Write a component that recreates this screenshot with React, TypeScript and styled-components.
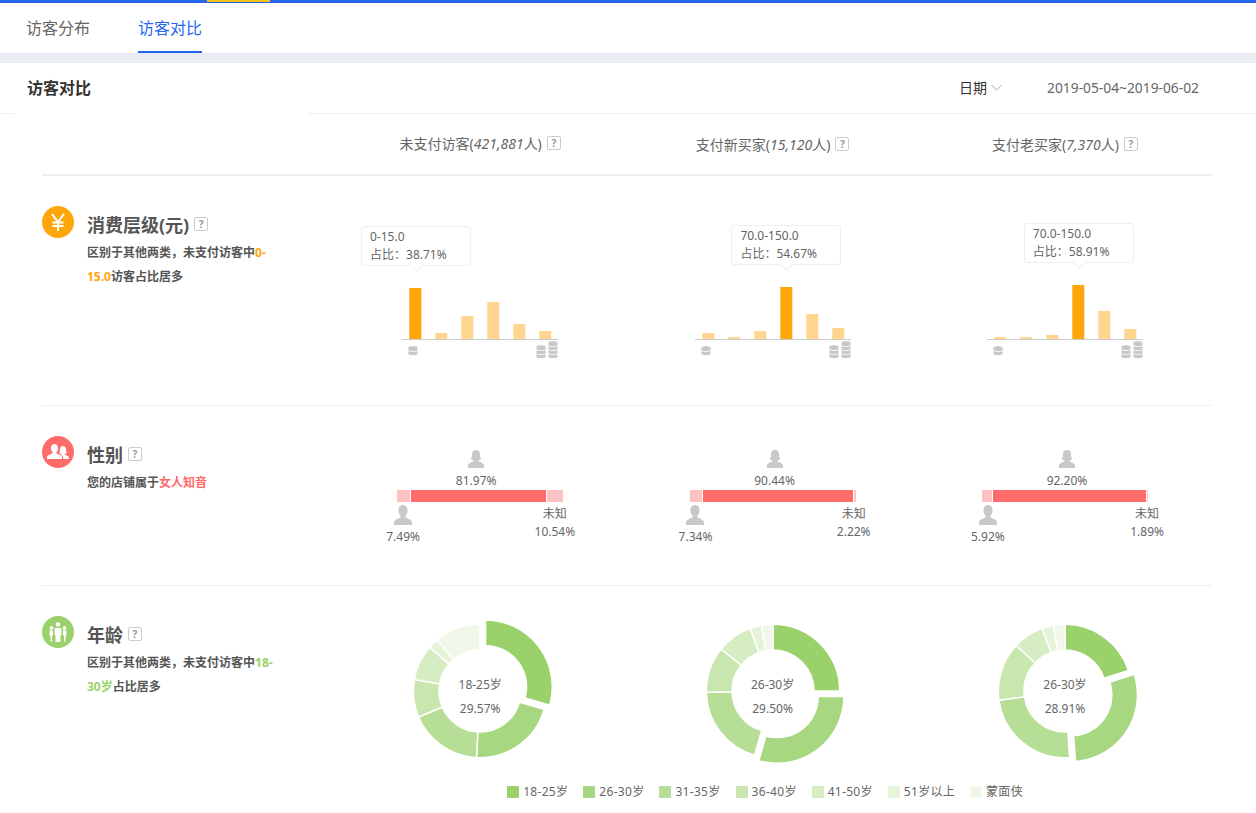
import React from "react";
import styled, { createGlobalStyle } from "styled-components";

const FONT = `"Noto Sans", "Noto Sans CJK SC", sans-serif`;
const ORANGE = "#ffa60b";
const RED = "#ff6a6a";
const GREEN = "#9ad16a";
const SLICE_COLORS = ["#9ad16a", "#a8d782", "#b7de97", "#c8e6ad", "#d6ecc3", "#e5f3d8", "#f1f8ea"];
const LEGEND = ["18-25岁", "26-30岁", "31-35岁", "36-40岁", "41-50岁", "51岁以上", "蒙面侠"];

const GlobalStyle = createGlobalStyle`
  html, body {
    margin: 0;
    padding: 0;
    background: #fff;
    overflow: hidden;
  }
  body {
    font-family: ${FONT};
    color: #666;
  }
`;

const Page = styled.div`
  width: 1256px;
  height: 813px;
  overflow: hidden;
  position: relative;
`;
const TopBar = styled.div`
  height: 3px;
  background: #2667ee;
  box-shadow: 0 1px 3px rgba(0, 0, 0, 0.18);
  padding-left: 207px;
`;
const TopBarMark = styled.div`
  width: 63px;
  height: 2px;
  background: #f5c518;
`;
const Nav = styled.nav`
  height: 50px;
  display: flex;
  gap: 48px;
  padding-left: 26px;
  background: #fff;
  box-shadow: 0 1px 3px rgba(0, 0, 0, 0.14);
`;
const NavTab = styled.a<{ $active?: boolean }>`
  font-size: 16px;
  line-height: 50px;
  height: 50px;
  box-sizing: border-box;
  color: ${(p) => (p.$active ? "#2667ee" : "#666")};
  border-bottom: 2px solid ${(p) => (p.$active ? "#2667ee" : "transparent")};
`;
const Gap = styled.div`
  height: 10px;
  background: #e9edf3;
`;
const PanelHeader = styled.header`
  height: 51px;
  box-sizing: border-box;
  position: relative;
  display: flex;
  align-items: center;
  padding: 0 57px 2px 27px;
  border-bottom: 1px solid #eee;
`;
const PanelTitle = styled.h2`
  margin: 0;
  flex: 1;
  font-size: 16px;
  font-weight: 700;
  color: #333;
`;
const DateSelect = styled.div`
  display: flex;
  align-items: center;
  gap: 4px;
  font-size: 14px;
  color: #333;
  margin-right: 45px;
`;
const DateRange = styled.div`
  font-size: 13.8px;
  color: #666;
`;
const LinePatch = styled.div`
  position: absolute;
  left: 15px;
  bottom: -1px;
  width: 293px;
  height: 1px;
  background: #fff;
`;
const Main = styled.main`
  margin: 0 44px 0 42px;
`;
const ColumnRow = styled.div`
  display: grid;
  grid-template-columns: 292px repeat(3, 292.4px);
  height: 62px;
  box-sizing: border-box;
  border-bottom: 2px solid #eee;
`;
const ColumnTitle = styled.div<{ $top: number }>`
  display: flex;
  justify-content: center;
  align-items: center;
  gap: 5px;
  font-size: 14px;
  color: #666;
  height: 20px;
  padding-top: ${(p) => p.$top}px;
  white-space: nowrap;
`;
const Help = styled.span`
  display: inline-flex;
  align-items: center;
  justify-content: center;
  width: 12px;
  height: 12px;
  border: 1px solid #ccc;
  border-radius: 2px;
  font-size: 10px;
  font-weight: 700;
  line-height: 1;
  color: #999;
`;
const Section = styled.section<{ $height: number; $last?: boolean }>`
  display: grid;
  grid-template-columns: 292px repeat(3, 292.4px);
  align-content: start;
  height: ${(p) => p.$height}px;
  margin-right: ${(p) => (p.$last ? 0 : 1)}px;
  border-bottom: ${(p) => (p.$last ? "none" : "1px solid #eee")};
`;
const Intro = styled.div`
  display: flex;
  gap: 13px;
  padding-top: 30px;
`;
const IconCircle = styled.div<{ $color: string }>`
  width: 32px;
  height: 32px;
  flex: none;
  border-radius: 50%;
  background: ${(p) => p.$color};
  display: flex;
  align-items: center;
  justify-content: center;
`;
const IntroBody = styled.div`
  width: 186px;
`;
const Heading = styled.h3`
  margin: 0;
  display: flex;
  align-items: center;
  gap: 5px;
  height: 35px;
  font-size: 18px;
  font-weight: 700;
  color: #555;
`;
const Summary = styled.p`
  margin: 0;
  font-size: 12px;
  font-weight: 700;
  line-height: 24px;
  color: #555;
`;
const Accent = styled.span<{ $color: string }>`
  color: ${(p) => p.$color};
`;

const BarCell = styled.div`
  display: flex;
  justify-content: center;
  padding-top: 104px;
`;
const BarChartBox = styled.div`
  position: relative;
  width: 156px;
  height: 80px;
`;
const Tooltip = styled.div`
  position: absolute;
  width: 110px;
  box-sizing: border-box;
  padding: 1px 8px;
  background: #fff;
  border: 1px solid #eee;
  border-radius: 3px;
  font-size: 12px;
  line-height: 18px;
  color: #666;
  white-space: nowrap;
  &::after {
    content: "";
    position: absolute;
    left: 50%;
    bottom: -5px;
    width: 8px;
    height: 8px;
    margin-left: -4px;
    background: #fff;
    border-right: 1px solid #eee;
    border-bottom: 1px solid #eee;
    transform: rotate(45deg);
  }
`;

const GenderCell = styled.div`
  display: flex;
  justify-content: center;
  padding-top: 44px;
`;
const GenderBox = styled.div`
  width: 166px;
  font-size: 12px;
  line-height: 18px;
  color: #666;
`;
const TopGroup = styled.div<{ $shift: number }>`
  display: flex;
  flex-direction: column;
  align-items: center;
  gap: 4px;
  margin-left: ${(p) => p.$shift}px;
`;
const GenderBar = styled.div`
  display: flex;
  gap: 1px;
  height: 12px;
`;
const GenderPart = styled.div<{ $strong?: boolean }>`
  background: ${(p) => (p.$strong ? RED : "#ffc2c2")};
`;
const BottomRow = styled.div`
  display: flex;
  justify-content: space-between;
  margin-top: 3px;
`;
const SideGroup = styled.div<{ $left?: number; $right?: number; $gap?: number }>`
  display: flex;
  flex-direction: column;
  align-items: center;
  gap: ${(p) => p.$gap ?? 0}px;
  margin-left: ${(p) => p.$left ?? 0}px;
  margin-right: ${(p) => p.$right ?? 0}px;
`;

const DonutCell = styled.div`
  display: flex;
  justify-content: center;
  padding-top: 25px;
`;
const DonutBox = styled.div`
  position: relative;
  width: 160px;
  height: 160px;
`;
const DonutLabel = styled.div`
  position: absolute;
  inset: 12px 0 0;
  display: flex;
  flex-direction: column;
  align-items: center;
  justify-content: center;
  font-size: 12px;
  line-height: 24px;
  color: #666;
`;
const Legend = styled.div`
  grid-column: 2 / 5;
  display: flex;
  justify-content: center;
  gap: 15px;
  padding: 12px 15px 0 0;
`;
const LegendItem = styled.div`
  display: flex;
  align-items: center;
  gap: 4px;
  font-size: 12px;
  line-height: 18px;
  letter-spacing: 0.3px;
  color: #666;
`;
const Swatch = styled.i<{ $color: string }>`
  width: 12px;
  height: 12px;
  background: ${(p) => p.$color};
`;

function Coins({ x, y, count }: { x: number; y: number; count: number }) {
  // the lower discs are drawn first, so each upper disc keeps its whole top
  const discs = Array.from({ length: count }, (_, i) => count - 1 - i);
  return (
    <g fill="#c8c8c8" stroke="#fff" strokeWidth="0.8">
      {discs.map((i) => (
        <path
          key={i}
          d={`M${x} ${y + i * 4 + 2}c0-1.300 2.200-2.200 5-2.200s5 .9 5 2.200v1.400c0 1.300-2.200 2.200-5 2.200s-5-.9-5-2.200z`}
        />
      ))}
    </g>
  );
}

type BarData = { bars: number[]; active: number; range: string; share: string };

function BarChart({ bars, active, range, share }: BarData) {
  const barCenter = 13.3 + active * 26;
  return (
    <BarChartBox>
      <svg width="156" height="80" viewBox="0 0 156 80">
        {bars.map((h, i) => (
          <rect
            key={i}
            x={7.3 + i * 26}
            y={59 - h}
            width="12"
            height={h}
            fill={i === active ? ORANGE : "#ffd58f"}
          />
        ))}
        <line x1="0" x2="156" y1="59.5" y2="59.5" stroke="#ccc" />
        <Coins x={6} y={66} count={2} />
        <Coins x={134} y={65} count={3} />
        <Coins x={146} y={61} count={4} />
      </svg>
      <Tooltip style={{ left: barCenter - 54.5, bottom: 43 + bars[active] }}>
        <div>{range}</div>
        <div>占比：{share}</div>
      </Tooltip>
    </BarChartBox>
  );
}

function Woman() {
  return (
    <svg width="18" height="18" viewBox="0 0 18 18" fill="#c8c8c8">
      <path d="M9 0c2.600 0 4 1.900 4 4.300 0 1.600.3 3.200 1 4.300.3.500-.5 1.400-2.300 1.700v1.200c1.600.7 5.300 1.500 5.300 4.500v2H1v-2c0-3 3.700-3.800 5.300-4.500v-1.200C4.500 10 3.700 9.100 4 8.600c.7-1.100 1-2.700 1-4.300C5 1.900 6.400 0 9 0z" />
    </svg>
  );
}

function Man() {
  return (
    <svg width="20" height="20" viewBox="0 0 20 20" fill="#c8c8c8">
      <path d="M10 0c2.900 0 4.600 2.200 4.600 5.200 0 2.200-.8 4.100-2.100 5.200v2c1.800.9 6.500 1.800 6.500 5V20H1v-2.600c0-3.200 4.700-4.100 6.500-5v-2C6.200 9.300 5.400 7.400 5.400 5.200 5.400 2.200 7.100 0 10 0z" />
    </svg>
  );
}

type GenderData = {
  female: string;
  male: string;
  unknown: string;
  parts: [number, number, number];
  shift: number;
  right: number;
};

function GenderChart({ female, male, unknown, parts, shift, right }: GenderData) {
  return (
    <GenderBox>
      <TopGroup $shift={shift}>
        <Woman />
        <div>{female}</div>
      </TopGroup>
      <GenderBar>
        <GenderPart style={{ width: parts[0] }} />
        <GenderPart $strong style={{ width: parts[1] }} />
        <GenderPart style={{ width: parts[2] }} />
      </GenderBar>
      <BottomRow>
        <SideGroup $left={-11} $gap={3}>
          <Man />
          <div>{male}</div>
        </SideGroup>
        <SideGroup $right={-right}>
          <div>未知</div>
          <div>{unknown}</div>
        </SideGroup>
      </BottomRow>
    </GenderBox>
  );
}

function polar(r: number, deg: number) {
  const a = (deg * Math.PI) / 180;
  return [80 + r * Math.sin(a), 80 - r * Math.cos(a)];
}

function slicePath(from: number, to: number) {
  const R = 66.7;
  const r = 41;
  const [x1, y1] = polar(R, from);
  const [x2, y2] = polar(R, to);
  const [x3, y3] = polar(r, to);
  const [x4, y4] = polar(r, from);
  const large = to - from > 180 ? 1 : 0;
  return `M${x1} ${y1}A${R} ${R} 0 ${large} 1 ${x2} ${y2}L${x3} ${y3}A${r} ${r} 0 ${large} 0 ${x4} ${y4}Z`;
}

type DonutData = { stops: number[]; selected: number; label: string; share: string };

function Donut({ stops, selected, label, share }: DonutData) {
  return (
    <DonutBox>
      <svg width="160" height="160" viewBox="0 0 160 160">
        {stops.slice(0, -1).map((from, i) => {
          const to = stops[i + 1];
          const mid = (((from + to) / 2) * Math.PI) / 180;
          const offset = i === selected ? 7 : 0;
          return (
            <path
              key={i}
              d={slicePath(from, to)}
              fill={SLICE_COLORS[i]}
              stroke="#fff"
              strokeWidth="1.5"
              transform={`translate(${offset * Math.sin(mid)} ${-offset * Math.cos(mid)})`}
            />
          );
        })}
      </svg>
      <DonutLabel>
        <div>{label}</div>
        <div>{share}</div>
      </DonutLabel>
    </DonutBox>
  );
}

const BAR_DATA: BarData[] = [
  { bars: [51, 6, 23, 37, 15, 8], active: 0, range: "0-15.0", share: "38.71%" },
  { bars: [6, 2, 8, 52, 25, 11], active: 3, range: "70.0-150.0", share: "54.67%" },
  { bars: [2, 2, 4, 54, 28, 10], active: 3, range: "70.0-150.0", share: "58.91%" },
];

const GENDER_DATA: GenderData[] = [
  { female: "81.97%", male: "7.49%", unknown: "10.54%", parts: [13, 135, 16], shift: -8, right: 12 },
  { female: "90.44%", male: "7.34%", unknown: "2.22%", parts: [12, 150, 2], shift: 4, right: 15 },
  { female: "92.20%", male: "5.92%", unknown: "1.89%", parts: [10, 153, 1], shift: 4, right: 16 },
];

const DONUT_DATA: DonutData[] = [
  { stops: [0, 106, 183, 247, 280, 311, 320, 360], selected: 0, label: "18-25岁", share: "29.57%" },
  { stops: [0, 90, 196, 269, 309, 340, 350, 360], selected: 1, label: "26-30岁", share: "29.50%" },
  { stops: [0, 72, 176, 262, 313, 340, 350, 360], selected: 1, label: "26-30岁", share: "28.91%" },
];

export default function App() {
  return (
    <Page>
      <GlobalStyle />
      <TopBar>
        <TopBarMark />
      </TopBar>
      <Nav>
        <NavTab>访客分布</NavTab>
        <NavTab $active>访客对比</NavTab>
      </Nav>
      <Gap />
      <PanelHeader>
        <PanelTitle>访客对比</PanelTitle>
        <DateSelect>
          日期
          <svg width="11" height="7" viewBox="0 0 11 7" fill="none" stroke="#aaa">
            <path d="M.5 1l5 5 5-5" />
          </svg>
        </DateSelect>
        <DateRange>2019-05-04~2019-06-02</DateRange>
        <LinePatch />
      </PanelHeader>
      <Main>
        <ColumnRow>
          <div />
          <ColumnTitle $top={19}>
            <span>
              未支付访客(<em>421,881</em>人)
            </span>
            <Help>?</Help>
          </ColumnTitle>
          <ColumnTitle $top={20}>
            <span>
              支付新买家(<em>15,120</em>人)
            </span>
            <Help>?</Help>
          </ColumnTitle>
          <ColumnTitle $top={20}>
            <span>
              支付老买家(<em>7,370</em>人)
            </span>
            <Help>?</Help>
          </ColumnTitle>
        </ColumnRow>

        <Section $height={229}>
          <Intro>
            <IconCircle $color={ORANGE}>
              <svg width="16" height="18" viewBox="0 0 16 18" fill="none" stroke="#fff" strokeWidth="2">
                <path d="M2 1l6 8 6-8M8 9v9M2.500 9.500h11M2.500 13h11" />
              </svg>
            </IconCircle>
            <IntroBody>
              <Heading>
                消费层级(元)
                <Help>?</Help>
              </Heading>
              <Summary>
                区别于其他两类，未支付访客中<Accent $color={ORANGE}>0-15.0</Accent>访客占比居多
              </Summary>
            </IntroBody>
          </Intro>
          {BAR_DATA.map((d, i) => (
            <BarCell key={i}>
              <BarChart {...d} />
            </BarCell>
          ))}
        </Section>

        <Section $height={179}>
          <Intro>
            <IconCircle $color={RED}>
              <svg width="22" height="16" viewBox="0 0 22 16" fill="#fff">
                <path d="M7.500 0c2.200 0 3.500 1.700 3.500 4 0 1.700-.6 3.100-1.500 4v1.500c1.300.7 5.500 1.400 5.500 3.900V15H0v-1.600c0-2.500 4.200-3.200 5.500-3.900V8C4.600 7.100 4 5.700 4 4c0-2.300 1.300-4 3.500-4z" />
                <path d="M16 2c1.900 0 3 1.400 3 3.300 0 1.300.3 2.500.8 3.300.2.400-.4 1-1.800 1.200v.9c1.200.5 4 1.100 4 3.300V15h-5.600c0-2.600-1.500-3.700-3-4.400.4-.2.600-.5.600-.8-1.300-.2-1.900-.8-1.700-1.200.5-.8.7-2 .7-3.300C13 3.400 14.100 2 16 2z" />
              </svg>
            </IconCircle>
            <IntroBody>
              <Heading>
                性别
                <Help>?</Help>
              </Heading>
              <Summary>
                您的店铺属于<Accent $color={RED}>女人知音</Accent>
              </Summary>
            </IntroBody>
          </Intro>
          {GENDER_DATA.map((d, i) => (
            <GenderCell key={i}>
              <GenderChart {...d} />
            </GenderCell>
          ))}
        </Section>

        <Section $height={227} $last>
          <Intro>
            <IconCircle $color={GREEN}>
              <svg width="20" height="20" viewBox="0 0 20 20" fill="#fff">
                <circle cx="10" cy="2.500" r="2.300" />
                <circle cx="3.500" cy="6" r="1.900" />
                <circle cx="16.500" cy="6" r="1.900" />
                <path d="M7 6h6l.5 1v6h-1v7h-5v-7h-1V7z" />
                <path d="M1.500 8.500h3.500v5h-1v6H2.500v-6h-1zM15 8.500h3.500v5h-1v6h-1.500v-6h-1z" />
              </svg>
            </IconCircle>
            <IntroBody>
              <Heading>
                年龄
                <Help>?</Help>
              </Heading>
              <Summary>
                区别于其他两类，未支付访客中<Accent $color={GREEN}>18-30岁</Accent>占比居多
              </Summary>
            </IntroBody>
          </Intro>
          {DONUT_DATA.map((d, i) => (
            <DonutCell key={i}>
              <Donut {...d} />
            </DonutCell>
          ))}
          <Legend>
            {LEGEND.map((name, i) => (
              <LegendItem key={name}>
                <Swatch $color={SLICE_COLORS[i]} />
                {name}
              </LegendItem>
            ))}
          </Legend>
        </Section>
      </Main>
    </Page>
  );
}
